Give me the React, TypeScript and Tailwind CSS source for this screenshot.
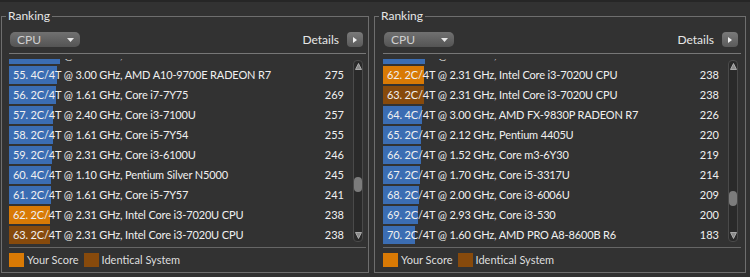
import React from 'react';

type Row = { rank: number; label: string; score: number; kind?: 'you' | 'same' };

const leftRows: Row[] = [
  { rank: 54, label: '2C/4T @ 2.70 GHz, Core i7-7500U', score: 295 },
  { rank: 55, label: '4C/4T @ 3.00 GHz, AMD A10-9700E RADEON R7', score: 275 },
  { rank: 56, label: '2C/4T @ 1.61 GHz, Core i7-7Y75', score: 269 },
  { rank: 57, label: '2C/4T @ 2.40 GHz, Core i3-7100U', score: 257 },
  { rank: 58, label: '2C/4T @ 1.61 GHz, Core i5-7Y54', score: 255 },
  { rank: 59, label: '2C/4T @ 2.31 GHz, Core i3-6100U', score: 246 },
  { rank: 60, label: '4C/4T @ 1.10 GHz, Pentium Silver N5000', score: 245 },
  { rank: 61, label: '2C/4T @ 1.61 GHz, Core i5-7Y57', score: 241 },
  { rank: 62, label: '2C/4T @ 2.31 GHz, Intel Core i3-7020U CPU', score: 238, kind: 'you' },
  { rank: 63, label: '2C/4T @ 2.31 GHz, Intel Core i3-7020U CPU', score: 238, kind: 'same' },
];

const rightRows: Row[] = [
  { rank: 61, label: '2C/4T @ 1.61 GHz, Core i5-7Y57', score: 241 },
  { rank: 62, label: '2C/4T @ 2.31 GHz, Intel Core i3-7020U CPU', score: 238, kind: 'you' },
  { rank: 63, label: '2C/4T @ 2.31 GHz, Intel Core i3-7020U CPU', score: 238, kind: 'same' },
  { rank: 64, label: '4C/4T @ 3.00 GHz, AMD FX-9830P RADEON R7', score: 226 },
  { rank: 65, label: '2C/4T @ 2.12 GHz, Pentium 4405U', score: 220 },
  { rank: 66, label: '2C/4T @ 1.52 GHz, Core m3-6Y30', score: 219 },
  { rank: 67, label: '2C/4T @ 1.70 GHz, Core i5-3317U', score: 214 },
  { rank: 68, label: '2C/4T @ 2.00 GHz, Core i3-6006U', score: 209 },
  { rank: 69, label: '2C/4T @ 2.93 GHz, Core i3-530', score: 200 },
  { rank: 70, label: '2C/4T @ 1.60 GHz, AMD PRO A8-8600B R6', score: 183 },
];

function barColor(kind?: string) {
  if (kind === 'you') return 'bg-[#d97a05]';
  if (kind === 'same') return 'bg-[#874a0c]';
  return 'bg-[#3b6db3]';
}

function ScrollBar({ thumbTop }: { thumbTop: number }) {
  return (
    <div className="relative w-[10px] h-[182px] mt-[1px] rounded-[4px] border border-[#4a4a4a] bg-[#2a2a2a]">
      <svg className="absolute left-[1px] top-[2px]" width="7" height="7" viewBox="0 0 7 7">
        <path d="M3.5 0.5 L6.5 6.5 L0.5 6.5 Z" fill="#8a8a8a" stroke="#bdbdbd" strokeWidth="0.8" />
      </svg>
      {/* thumb */}
      <div
        className="absolute left-0 w-[8px] h-[15px] rounded-[4px] bg-[#7c7c7c]"
        style={{ top: thumbTop }}
      />
      <svg className="absolute left-[1px] bottom-[2px]" width="7" height="7" viewBox="0 0 7 7">
        <path d="M0.5 0.5 L6.5 0.5 L3.5 6.5 Z" fill="#8a8a8a" stroke="#bdbdbd" strokeWidth="0.8" />
      </svg>
    </div>
  );
}

function Panel({ rows, thumbTop, className, pad }: { rows: Row[]; thumbTop: number; className: string; pad: string }) {
  return (
    <div className={`relative mt-[16px] h-[257px] border border-[#6e6e6e] ${className}`}>
      <div className="absolute -top-[9px] left-[4px] bg-[#323232] px-[2px] text-[12px] leading-[16px] text-[#e6e6e6]">
        Ranking
      </div>
      <div className={`flex flex-col ${pad}`}>
        {/* toolbar */}
        <div className="flex items-center justify-between h-[17px] mt-[14px]">
          <div className="ml-[1px] flex items-center justify-between w-[70px] h-[15px] rounded-[5px] bg-gradient-to-b from-[#717171] to-[#545454] pl-[7px] pr-[6px]">
            <span className="text-[12px] leading-[15px] text-[#d0d0d0]">CPU</span>
            <svg width="7" height="4" viewBox="0 0 7 4">
              <path d="M0 0 L7 0 L3.5 4 Z" fill="#e6e6e6" />
            </svg>
          </div>
          <div className="flex items-center">
            <span className="text-[12px] leading-[15px] text-[#e6e6e6] mr-[8px]">Details</span>
            <div className="flex items-center justify-center w-[16px] h-[15px] rounded-[4px] bg-gradient-to-b from-[#7a7a7a] to-[#5a5a5a]">
              <svg width="4" height="6" viewBox="0 0 4 6">
                <path d="M0 0 L4 3 L0 6 Z" fill="#f0f0f0" />
              </svg>
            </div>
          </div>
        </div>
        <div className="mt-[5px] h-px bg-[#777] -mr-[3px]" />
        {/* list */}
        <div className="flex mt-[5px]">
          <div className="flex-1 h-[186px] overflow-hidden">
            <div className="-mt-[14px]">
              {rows.map((r) => (
                <div key={r.rank} className="relative flex items-center h-[20px] pr-[9px]">
                  <div
                    className={`absolute left-0 top-[1px] h-[18px] ${barColor(r.kind)}`}
                    style={{ width: Math.round(r.score * 0.173) }}
                  />
                  <span className="relative flex-1 pl-[4px] text-[11px] tracking-[-0.15px] text-[#f0f0f0] whitespace-nowrap">
                    {r.rank}. {r.label}
                  </span>
                  <span className="relative text-[11px] text-[#f0f0f0]">{r.score}</span>
                </div>
              ))}
            </div>
          </div>
          <ScrollBar thumbTop={thumbTop} />
        </div>
        <div className="mt-[2px] h-px bg-[#666] -mr-[3px]" />
        {/* legend */}
        <div className="flex items-center h-[14px] mt-[5px] text-[11px] text-[#dedede]">
          <div className="w-[15px] h-[14px] bg-[#d97a05]" />
          <span className="ml-[3px]">Your Score</span>
          <div className="ml-[5px] w-[15px] h-[14px] bg-[#874a0c]" />
          <span className="ml-[3px]">Identical System</span>
        </div>
      </div>
    </div>
  );
}

export default function App() {
  return (
    <div
      className="w-[750px] h-[277px] overflow-hidden bg-[#323232] border-t-2 border-[#262626]"
      style={{ fontFamily: 'Lato, "Noto Sans", sans-serif' }}
    >
      <div className="flex -mt-[2px]">
        <Panel rows={leftRows} thumbTop={116} className="ml-[1px] w-[368px]" pad="pl-[7px] pr-[5px]" />
        <Panel rows={rightRows} thumbTop={130} className="ml-[5px] w-[372px]" pad="pl-[8px] pr-[7px]" />
      </div>
    </div>
  );
}
